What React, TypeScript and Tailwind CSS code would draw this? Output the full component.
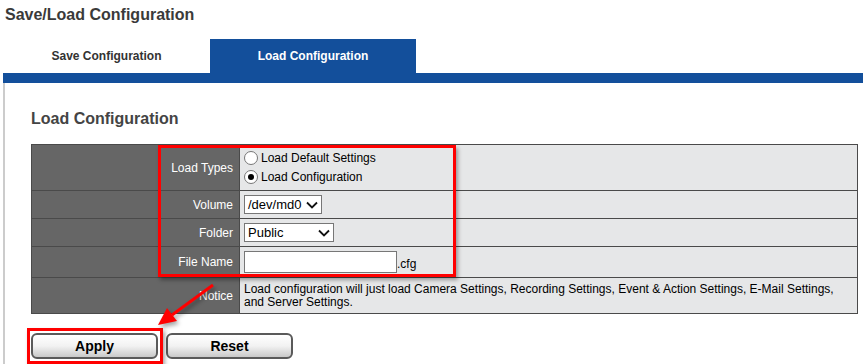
import React from 'react';

const BLUE = 'bg-[#134f9b]';

const Radio: React.FC<{ checked?: boolean; label: string }> = ({ checked, label }) => (
  <label className="flex items-center gap-[3px] h-[19px]">
    <span className="w-[14px] h-[14px] rounded-full border border-[#777] bg-white flex items-center justify-center">
      {checked && <span className="w-[6px] h-[6px] rounded-full bg-black" />}
    </span>
    <span>{label}</span>
  </label>
);

const Select: React.FC<{ value: string; className: string }> = ({ value, className }) => (
  <div className={`h-[19px] border border-[#777] bg-white flex items-center justify-between pl-[3px] pr-[3px] text-[13px] ${className}`}>
    <span>{value}</span>
    <svg width="12" height="8" viewBox="0 0 12 8">
      <path d="M1 1.5 L6 6.5 L11 1.5" fill="none" stroke="#111" strokeWidth="1.8" />
    </svg>
  </div>
);

const Row: React.FC<{ label: string; h: string; children: React.ReactNode; last?: boolean }> = ({ label, h, children, last }) => (
  <div className={`flex ${h} ${last ? '' : 'border-b border-[#4a4a4a]'}`}>
    <div className="w-[208px] shrink-0 bg-[#666666] text-white flex items-center justify-end pr-[6px] border-r border-[#4a4a4a]">
      {label}
    </div>
    <div className="flex-1 bg-[#e6e7e8] flex items-center pl-[4px] pr-[6px]">{children}</div>
  </div>
);

const Button: React.FC<{ label: string }> = ({ label }) => (
  <button className="w-[127px] h-[26px] rounded-[6px] border-2 border-[#5a5a5a] bg-gradient-to-b from-white via-[#f2f2f2] to-[#c9c9c9] text-[14px] font-bold text-black">
    {label}
  </button>
);

export default function App() {
  return (
    <div className="relative w-[863px] h-[364px] overflow-hidden bg-white text-[12px] text-black font-['Liberation_Sans',Arial,sans-serif]">
      <div className="h-[39px] pl-[5px] pt-[3px] text-[16px] font-bold text-[#3a3a3a]">Save/Load Configuration</div>

      <div className="flex h-[34px] pl-[3px] text-[12px] font-bold">
        <div className="w-[207px] flex items-center justify-center text-[#333]">Save Configuration</div>
        <div className={`w-[206px] flex items-center justify-center text-white ${BLUE}`}>Load Configuration</div>
      </div>
      <div className={`h-[10px] ml-[3px] ${BLUE}`} />

      <div className="ml-[3px] border-l-2 border-[#cccccc] pl-[26px] pt-[24px] h-[281px]">
        <div className="h-[37px] text-[16px] font-bold text-[#444]">Load Configuration</div>

        <div className="w-[827px] border border-[#4a4a4a]">
          <Row label="Load Types" h="h-[46px]">
            <div className="flex flex-col">
              <Radio label="Load Default Settings" />
              <Radio checked label="Load Configuration" />
            </div>
          </Row>
          <Row label="Volume" h="h-[28px]">
            <Select value="/dev/md0" className="w-[78px]" />
          </Row>
          <Row label="Folder" h="h-[28px]">
            <Select value="Public" className="w-[90px]" />
          </Row>
          <Row label="File Name" h="h-[31px]">
            <div className="w-[153px] h-[22px] border border-[#777] bg-white" />
            <span className="mt-[4px]">.cfg</span>
          </Row>
          <Row label="Notice" h="h-[35px]" last>
            <span className="leading-[13px]">
              Load configuration will just load Camera Settings, Recording Settings, Event &amp; Action Settings, E-Mail Settings, and Server Settings.
            </span>
          </Row>
        </div>

        <div className="flex gap-[8px] mt-[19px]">
          <Button label="Apply" />
          <Button label="Reset" />
        </div>
      </div>

      {/* annotations */}
      <div className="absolute left-[158px] top-[145px] w-[298px] h-[132px] border-[3px] border-[#ff0000] shadow-[2px_3px_4px_rgba(0,0,0,0.35)]" />
      <div className="absolute left-[27px] top-[328px] w-[136px] h-[36px] border-[3px] border-[#ff0000] shadow-[2px_3px_4px_rgba(0,0,0,0.35)]" />
      <svg className="absolute left-0 top-0" width="863" height="364" style={{ filter: 'drop-shadow(2px 3px 2px rgba(0,0,0,0.35))' }}>
        <line x1="213" y1="285" x2="172" y2="315" stroke="#ff0000" strokeWidth="3" />
        <polygon points="158,325 167,308 177,321" fill="#ff0000" />
      </svg>
    </div>
  );
}
